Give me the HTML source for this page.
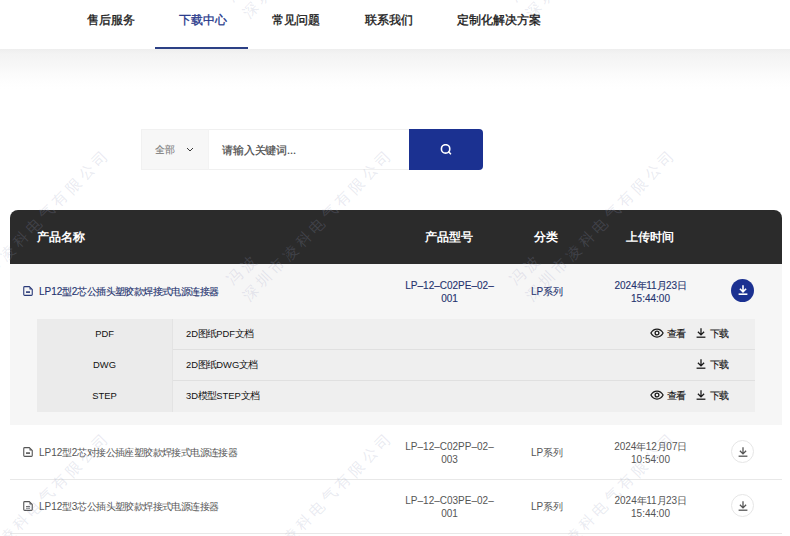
<!DOCTYPE html>
<html><head><meta charset="utf-8">
<style>
*{margin:0;padding:0;box-sizing:border-box}
html,body{width:790px;height:536px;overflow:hidden;background:#fff}
body{font-family:"Liberation Sans",sans-serif;color:#333;position:relative}
i{font-style:normal}
.a{position:absolute;white-space:nowrap}
.nav{position:absolute;left:0;top:0;width:790px;height:49px;background:#fff}
.nav span{position:absolute;top:12px;font-size:12px;font-weight:normal;-webkit-text-stroke:0.35px #1a1a1a;color:#1a1a1a;line-height:16px;white-space:nowrap}
.nav .act{color:#26378a;font-weight:normal;-webkit-text-stroke:0.3px #26378a}
.nav .ul{position:absolute;left:155px;top:47px;width:93px;height:2px;background:#2c4085}
.grad{position:absolute;left:0;top:49px;width:790px;height:40px;background:linear-gradient(#eeeeee 0,#f3f3f3 5px,#f7f7f7 16px,#fbfbfb 25px,#fefefe 34px,#fff 40px)}
.search{position:absolute;top:129px;left:141px;height:41px}
.sel{position:absolute;left:0;top:0;width:67px;height:41px;background:#f7f7f7;border:1px solid #f1f1f1;border-right:none}
.inp{position:absolute;left:67px;top:0;width:202px;height:41px;background:#fff;border:1px solid #f0f0f0;border-left:1px solid #f3f3f3}
.btn{position:absolute;left:268px;top:0;width:74px;height:41px;background:#1b3191;border-radius:0 4px 4px 0}
.th{position:absolute;left:10px;top:210px;width:772px;height:54px;background:#2b2b2b;border-radius:8px 8px 0 0}
.th span{position:absolute;top:19px;color:#fff;font-weight:bold;font-size:12px;line-height:16px;white-space:nowrap}
.r1{position:absolute;left:10px;top:264px;width:772px;height:161px;background:#f6f6f6}
.sub{position:absolute;left:37px;top:319px;width:718px;height:93px;background:#efefef}
.subl{position:absolute;left:37px;top:319px;width:136px;height:93px;background:#ebebeb;border-right:1px solid #e3e3e3}
.hl{position:absolute;left:173px;width:582px;height:1px;background:#e0e0e0}
.line{position:absolute;left:10px;width:772px;height:1px;background:#e8e8e8}
.t10{font-size:10px;line-height:13px}
.c{text-align:center}
.blue{color:#25336f;-webkit-text-stroke:0.12px #25336f}
.gray{color:#555}
.dk{color:#222}
.k{letter-spacing:-0.6px}
.ks{letter-spacing:-1.0px}
.ks2{font-size:10px;letter-spacing:-0.85px}
.wm{position:absolute;width:16px;height:18px;font-size:15px;line-height:18px;font-weight:300;text-align:center;color:rgba(150,155,190,0.21);transform:rotate(-45.3deg)}
</style></head>
<body>
<div class="nav">
  <span style="left:87px">售后服务</span>
  <span class="act" style="left:179px">下载中心</span>
  <span style="left:272px">常见问题</span>
  <span style="left:365px">联系我们</span>
  <span style="left:457px">定制化解决方案</span>
  <div class="ul"></div>
</div>
<div class="grad"></div>
<div class="search">
  <div class="sel"><span class="a" style="left:13px;top:13px;font-size:9.5px;color:#808080;line-height:13px;letter-spacing:-0.3px;-webkit-text-stroke:0.1px #808080">全部</span>
    <svg class="a" style="left:44px;top:17px" width="8" height="5" viewBox="0 0 8 5"><path d="M1 1L4 4L7 1" fill="none" stroke="#3a3a3a" stroke-width="1"/></svg>
  </div>
  <div class="inp"><span class="a" style="left:13px;top:13px;font-size:11px;color:#4a4a4a;line-height:14px;letter-spacing:-0.15px;-webkit-text-stroke:0.2px #4a4a4a">请输入关键词...</span></div>
  <div class="btn">
    <svg class="a" style="left:31px;top:15px" width="12" height="12" viewBox="0 0 12 12"><circle cx="5.6" cy="4.9" r="4.2" fill="none" stroke="#fff" stroke-width="1.6"/><path d="M8.7 8L10.5 9.8" stroke="#fff" stroke-width="1.6" stroke-linecap="round"/></svg>
  </div>
</div>
<div class="th">
  <span style="left:27px">产品名称</span>
  <span style="left:415px">产品型号</span>
  <span style="left:524px">分类</span>
  <span style="left:616px">上传时间</span>
</div>
<div class="r1"></div>
<div class="sub"></div>
<div class="subl"></div>
<div class="hl" style="top:349px"></div>
<div class="hl" style="top:380px"></div>
<div class="line" style="top:479px"></div>
<div class="line" style="top:533px"></div>

<svg class="a" style="left:23px;top:286px" width="10" height="10" viewBox="0 0 10 10"><path d="M1.7 0.65H6.3L9.25 3.6V8.5Q9.25 9.35 8.4 9.35H1.7Q0.75 9.35 0.75 8.5V1.5Q0.75 0.65 1.7 0.65Z" fill="none" stroke="#2a3a78" stroke-width="1.1"/><path d="M6.5 1.3L8.6 3.4H6.5Z" fill="#2a3a78"/><path d="M3 6.1H7" stroke="#2a3a78" stroke-width="1.6"/></svg>
<span class="a t10 blue" style="left:39px;top:285px;">LP12<i class="k">型</i>2<i class="k">芯公插头塑胶款焊接式电源连接器</i></span>
<div class="a c t10 blue" style="left:389.5px;top:279px;width:120px;">LP–12–C02PE–02–<br>001</div>
<span class="a t10 blue" style="left:531px;top:285px;">LP<i class="k">系列</i></span>
<div class="a c t10 blue" style="left:590.5px;top:279px;width:120px;">2024<i class="k">年</i>11<i class="k">月</i>23<i class="k">日</i><br>15:44:00</div>
<div class="a" style="left:731px;top:279px;width:23px;height:23px;border-radius:50%;background:#1b3191"></div>
<svg class="a" style="left:738px;top:285px" width="10" height="10" viewBox="0 0 10 10"><path d="M5 0.3V6.9M1.9 3.8L5 6.9L8.1 3.8" fill="none" stroke="#fff" stroke-width="1.6"/><path d="M0.6 9.2H9.4" stroke="#fff" stroke-width="1.6"/></svg>
<svg class="a" style="left:23px;top:447px" width="10" height="10" viewBox="0 0 10 10"><path d="M1.7 0.65H6.3L9.25 3.6V8.5Q9.25 9.35 8.4 9.35H1.7Q0.75 9.35 0.75 8.5V1.5Q0.75 0.65 1.7 0.65Z" fill="none" stroke="#555" stroke-width="1.1"/><path d="M6.5 1.3L8.6 3.4H6.5Z" fill="#555"/><path d="M3 6.1H7" stroke="#555" stroke-width="1.6"/></svg>
<span class="a t10 gray" style="left:39px;top:446px;">LP12<i class="k">型</i>2<i class="k">芯对接公插座塑胶款焊接式电源连接器</i></span>
<div class="a c t10 gray" style="left:389.5px;top:440px;width:120px;">LP–12–C02PP–02–<br>003</div>
<span class="a t10 gray" style="left:531px;top:446px;">LP<i class="k">系列</i></span>
<div class="a c t10 gray" style="left:590.5px;top:440px;width:120px;">2024<i class="k">年</i>12<i class="k">月</i>07<i class="k">日</i><br>10:54:00</div>
<div class="a" style="left:731px;top:440px;width:23px;height:23px;border-radius:50%;border:1px solid #e6e6e6;background:#fff"></div>
<svg class="a" style="left:737.5px;top:446.5px" width="10" height="10" viewBox="0 0 10 10"><path d="M5 0.3V6.9M1.9 3.8L5 6.9L8.1 3.8" fill="none" stroke="#555" stroke-width="1.3"/><path d="M0.6 9.2H9.4" stroke="#555" stroke-width="1.3"/></svg>
<svg class="a" style="left:23px;top:501px" width="10" height="10" viewBox="0 0 10 10"><path d="M1.7 0.65H6.3L9.25 3.6V8.5Q9.25 9.35 8.4 9.35H1.7Q0.75 9.35 0.75 8.5V1.5Q0.75 0.65 1.7 0.65Z" fill="none" stroke="#555" stroke-width="1.1"/><path d="M6.5 1.3L8.6 3.4H6.5Z" fill="#555"/><path d="M3 5.5H7M3 7.2H7" stroke="#555" stroke-width="0.85"/></svg>
<span class="a t10 gray" style="left:39px;top:500px;">LP12<i class="k">型</i>3<i class="k">芯公插头塑胶款焊接式电源连接器</i></span>
<div class="a c t10 gray" style="left:389.5px;top:494px;width:120px;">LP–12–C03PE–02–<br>001</div>
<span class="a t10 gray" style="left:531px;top:500px;">LP<i class="k">系列</i></span>
<div class="a c t10 gray" style="left:590.5px;top:494px;width:120px;">2024<i class="k">年</i>11<i class="k">月</i>23<i class="k">日</i><br>15:44:00</div>
<div class="a" style="left:731px;top:494px;width:23px;height:23px;border-radius:50%;border:1px solid #e6e6e6;background:#fff"></div>
<svg class="a" style="left:737.5px;top:500.5px" width="10" height="10" viewBox="0 0 10 10"><path d="M5 0.3V6.9M1.9 3.8L5 6.9L8.1 3.8" fill="none" stroke="#555" stroke-width="1.3"/><path d="M0.6 9.2H9.4" stroke="#555" stroke-width="1.3"/></svg>
<div class="a c t10 dk" style="left:54.5px;top:327px;width:100px;font-size:9.4px;color:#111">PDF</div>
<span class="a t10 dk" style="left:186px;top:327px;font-size:9.4px;color:#111">2D<i class="ks2">图纸</i>PDF<i class="ks2">文档</i></span>
<svg class="a" style="left:650px;top:328px" width="14" height="10" viewBox="0 0 14 10"><path d="M0.9 5C2.5 2 4.6 1 7 1C9.4 1 11.5 2 13.1 5C11.5 8 9.4 9 7 9C4.6 9 2.5 8 0.9 5Z" fill="none" stroke="#1a1a1a" stroke-width="1.25"/><circle cx="7" cy="5" r="1.9" fill="none" stroke="#1a1a1a" stroke-width="1.3"/></svg>
<span class="a t10 dk" style="left:667px;top:327px;font-weight:normal;-webkit-text-stroke:0.15px #1a1a1a;font-size:9.5px;color:#1a1a1a"><i class="ks">查看</i></span>
<svg class="a" style="left:696px;top:328px" width="10" height="10" viewBox="0 0 10 10"><path d="M5 0.3V6.9M1.9 3.8L5 6.9L8.1 3.8" fill="none" stroke="#1a1a1a" stroke-width="1.3"/><path d="M0.6 9.2H9.4" stroke="#1a1a1a" stroke-width="1.3"/></svg>
<span class="a t10 dk" style="left:710px;top:327px;font-weight:normal;-webkit-text-stroke:0.15px #1a1a1a;font-size:9.5px;color:#1a1a1a"><i class="ks">下载</i></span>
<div class="a c t10 dk" style="left:54.5px;top:358px;width:100px;font-size:9.4px;color:#111">DWG</div>
<span class="a t10 dk" style="left:186px;top:358px;font-size:9.4px;color:#111">2D<i class="ks2">图纸</i>DWG<i class="ks2">文档</i></span>
<svg class="a" style="left:696px;top:359px" width="10" height="10" viewBox="0 0 10 10"><path d="M5 0.3V6.9M1.9 3.8L5 6.9L8.1 3.8" fill="none" stroke="#1a1a1a" stroke-width="1.3"/><path d="M0.6 9.2H9.4" stroke="#1a1a1a" stroke-width="1.3"/></svg>
<span class="a t10 dk" style="left:710px;top:358px;font-weight:normal;-webkit-text-stroke:0.15px #1a1a1a;font-size:9.5px;color:#1a1a1a"><i class="ks">下载</i></span>
<div class="a c t10 dk" style="left:54.5px;top:389px;width:100px;font-size:9.4px;color:#111">STEP</div>
<span class="a t10 dk" style="left:186px;top:389px;font-size:9.4px;color:#111">3D<i class="ks2">模型</i>STEP<i class="ks2">文档</i></span>
<svg class="a" style="left:650px;top:390px" width="14" height="10" viewBox="0 0 14 10"><path d="M0.9 5C2.5 2 4.6 1 7 1C9.4 1 11.5 2 13.1 5C11.5 8 9.4 9 7 9C4.6 9 2.5 8 0.9 5Z" fill="none" stroke="#1a1a1a" stroke-width="1.25"/><circle cx="7" cy="5" r="1.9" fill="none" stroke="#1a1a1a" stroke-width="1.3"/></svg>
<span class="a t10 dk" style="left:667px;top:389px;font-weight:normal;-webkit-text-stroke:0.15px #1a1a1a;font-size:9.5px;color:#1a1a1a"><i class="ks">查看</i></span>
<svg class="a" style="left:696px;top:390px" width="10" height="10" viewBox="0 0 10 10"><path d="M5 0.3V6.9M1.9 3.8L5 6.9L8.1 3.8" fill="none" stroke="#1a1a1a" stroke-width="1.3"/><path d="M0.6 9.2H9.4" stroke="#1a1a1a" stroke-width="1.3"/></svg>
<span class="a t10 dk" style="left:710px;top:389px;font-weight:normal;-webkit-text-stroke:0.15px #1a1a1a;font-size:9.5px;color:#1a1a1a"><i class="ks">下载</i></span>
<div style="position:absolute;left:0;top:0;width:790px;height:536px;overflow:hidden;pointer-events:none"><b class="wm" style="left:-13.7px;top:256.9px">市</b><b class="wm" style="left:-0.5px;top:243.5px">凌</b><b class="wm" style="left:12.7px;top:230.2px">科</b><b class="wm" style="left:26.0px;top:216.8px">电</b><b class="wm" style="left:39.2px;top:203.4px">气</b><b class="wm" style="left:52.4px;top:190.1px">有</b><b class="wm" style="left:65.6px;top:176.7px">限</b><b class="wm" style="left:78.9px;top:163.4px">公</b><b class="wm" style="left:92.1px;top:150.0px">司</b><b class="wm" style="left:-13.7px;top:539.9px">市</b><b class="wm" style="left:-0.5px;top:526.5px">凌</b><b class="wm" style="left:12.7px;top:513.2px">科</b><b class="wm" style="left:26.0px;top:499.8px">电</b><b class="wm" style="left:39.2px;top:486.4px">气</b><b class="wm" style="left:52.4px;top:473.1px">有</b><b class="wm" style="left:65.6px;top:459.7px">限</b><b class="wm" style="left:78.9px;top:446.4px">公</b><b class="wm" style="left:92.1px;top:433.0px">司</b><b class="wm" style="left:242.8px;top:0.6px">深</b><b class="wm" style="left:256.0px;top:-12.8px">圳</b><b class="wm" style="left:227.4px;top:-14.7px">冯</b><b class="wm" style="left:242.8px;top:283.6px">深</b><b class="wm" style="left:256.0px;top:270.2px">圳</b><b class="wm" style="left:269.3px;top:256.9px">市</b><b class="wm" style="left:282.5px;top:243.5px">凌</b><b class="wm" style="left:295.7px;top:230.2px">科</b><b class="wm" style="left:309.0px;top:216.8px">电</b><b class="wm" style="left:322.2px;top:203.4px">气</b><b class="wm" style="left:335.4px;top:190.1px">有</b><b class="wm" style="left:348.6px;top:176.7px">限</b><b class="wm" style="left:361.9px;top:163.4px">公</b><b class="wm" style="left:375.1px;top:150.0px">司</b><b class="wm" style="left:227.4px;top:268.3px">冯</b><b class="wm" style="left:240.6px;top:254.9px">波</b><b class="wm" style="left:269.3px;top:539.9px">市</b><b class="wm" style="left:282.5px;top:526.5px">凌</b><b class="wm" style="left:295.7px;top:513.2px">科</b><b class="wm" style="left:309.0px;top:499.8px">电</b><b class="wm" style="left:322.2px;top:486.4px">气</b><b class="wm" style="left:335.4px;top:473.1px">有</b><b class="wm" style="left:348.6px;top:459.7px">限</b><b class="wm" style="left:361.9px;top:446.4px">公</b><b class="wm" style="left:375.1px;top:433.0px">司</b><b class="wm" style="left:240.6px;top:537.9px">波</b><b class="wm" style="left:525.8px;top:0.6px">深</b><b class="wm" style="left:539.0px;top:-12.8px">圳</b><b class="wm" style="left:510.4px;top:-14.7px">冯</b><b class="wm" style="left:525.8px;top:283.6px">深</b><b class="wm" style="left:539.0px;top:270.2px">圳</b><b class="wm" style="left:552.3px;top:256.9px">市</b><b class="wm" style="left:565.5px;top:243.5px">凌</b><b class="wm" style="left:578.7px;top:230.2px">科</b><b class="wm" style="left:591.9px;top:216.8px">电</b><b class="wm" style="left:605.2px;top:203.4px">气</b><b class="wm" style="left:618.4px;top:190.1px">有</b><b class="wm" style="left:631.6px;top:176.7px">限</b><b class="wm" style="left:644.9px;top:163.4px">公</b><b class="wm" style="left:658.1px;top:150.0px">司</b><b class="wm" style="left:510.4px;top:268.3px">冯</b><b class="wm" style="left:523.6px;top:254.9px">波</b><b class="wm" style="left:552.3px;top:539.9px">市</b><b class="wm" style="left:565.5px;top:526.5px">凌</b><b class="wm" style="left:578.7px;top:513.2px">科</b><b class="wm" style="left:591.9px;top:499.8px">电</b><b class="wm" style="left:605.2px;top:486.4px">气</b><b class="wm" style="left:618.4px;top:473.1px">有</b><b class="wm" style="left:631.6px;top:459.7px">限</b><b class="wm" style="left:644.9px;top:446.4px">公</b><b class="wm" style="left:658.1px;top:433.0px">司</b><b class="wm" style="left:523.6px;top:537.9px">波</b><b class="wm" style="left:793.4px;top:-14.7px">冯</b><b class="wm" style="left:793.4px;top:268.3px">冯</b></div>
</body></html>
